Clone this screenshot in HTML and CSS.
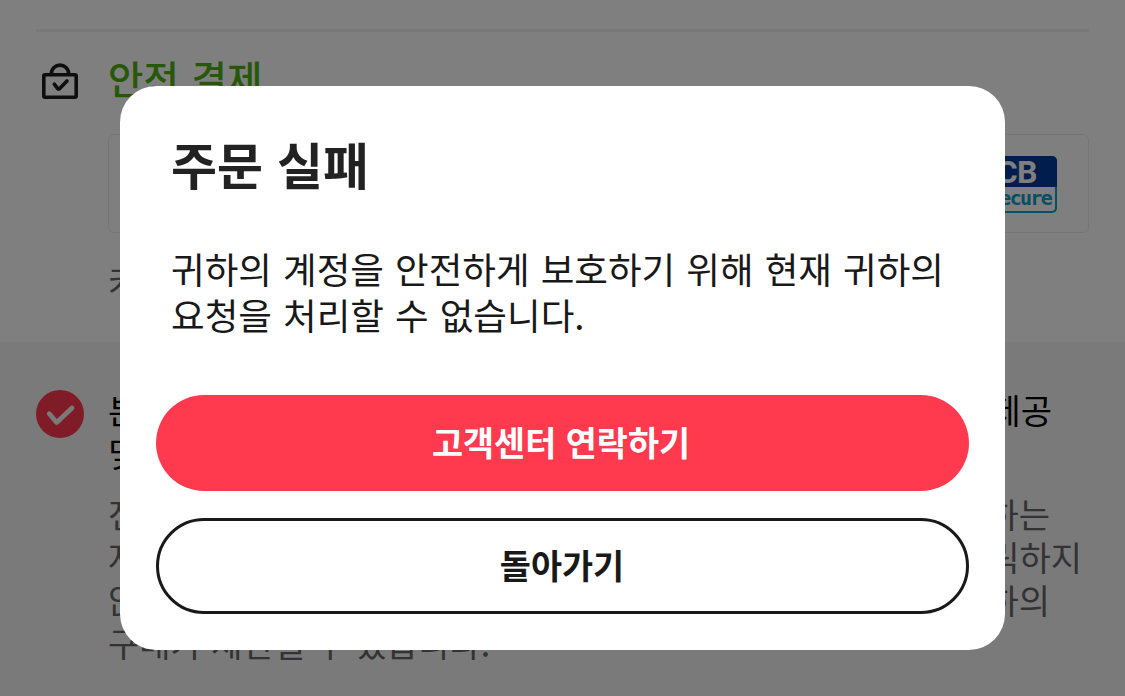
FILE: index.html
```html
<!DOCTYPE html>
<html lang="ko">
<head>
<meta charset="utf-8">
<title>주문 실패</title>
<link rel="stylesheet" href="styles.css">
</head>
<body>
<div class="page">
  <section class="payment">
    <svg class="lock" width="48" height="48" viewBox="0 0 48 48" fill="none" stroke="#1c1c1c" stroke-width="3.600" stroke-linecap="round" stroke-linejoin="round">
      <rect x="7.800" y="16.800" width="32.400" height="22.400" rx="1.200"/>
      <path d="M15.200 16.500C15.200 4 32.800 4 32.800 16.500"/>
      <path d="M18.300 26.200l3.400 4.400q1 .8 2 0l7.300-7.600"/>
    </svg>
    <div class="payment-body">
      <h2>안전 결제</h2>
      <div class="badges">
        <div class="jcb">
          <div class="jcb-name">JCB</div>
          <div class="jcb-secure">J/Secure</div>
        </div>
      </div>
      <p class="card-note">카드</p>
    </div>
  </section>
  <section class="terms">
    <svg class="check" width="48" height="48" viewBox="0 0 48 48" fill="none">
      <circle cx="24" cy="24" r="24" fill="#ff394e"/>
      <path d="M13.300 23.700l7.400 8.800L36 18" stroke="#f5f5f5" stroke-width="4.800" stroke-linecap="round" stroke-linejoin="round"/>
    </svg>
    <div class="terms-body">
      <p class="agree">
        <span class="line line-a"><span>본</span><span>제공</span></span>
        <span class="line"><span>및</span></span>
      </p>
      <p class="detail">
        <span class="line line-b"><span>전</span><span>하는</span></span>
        <span class="line line-c"><span>자</span><span>클릭하지</span></span>
        <span class="line line-b"><span>않</span><span>귀하의</span></span>
        <span class="line"><span>구매가 제한될 수 있습니다.</span></span>
      </p>
    </div>
  </section>
</div>

<div class="overlay">
  <div class="modal">
    <h1>주문 실패</h1>
    <p class="message">귀하의 계정을 안전하게 보호하기 위해 현재 귀하의<br>요청을 처리할 수 없습니다.</p>
    <button class="btn btn-primary">고객센터 연락하기</button>
    <button class="btn btn-outline">돌아가기</button>
  </div>
</div>
</body>
</html>
```
FILE: styles.css
```css
* {
  box-sizing: border-box;
}

body {
  margin: 0;
  height: 696px;
  overflow: hidden;
  background: #fff;
  font-family: "Noto Sans CJK KR", sans-serif;
}

h1, h2, p {
  margin: 0;
  white-space: nowrap;
}

.page {
  height: 696px;
  padding-top: 29px;
  overflow: hidden;
}

.payment {
  display: flex;
  gap: 24px;
  height: 313px;
  margin: 0 36px;
  padding-top: 20px;
  border-top: 3px solid #f2f2f2;
}

.lock {
  flex: none;
  margin-top: 6px;
}

.payment-body {
  flex: 1;
}

h2 {
  height: 82px;
  font-size: 38.5px;
  font-weight: 500;
  line-height: 50px;
  word-spacing: 2px;
  color: #4fb010;
}

/* card brand logos */
.badges {
  display: flex;
  justify-content: flex-end;
  width: 981px;
  height: 99px;
  padding: 21px 31px;
  border: 1px solid #ebebeb;
  border-radius: 6px;
}

.jcb {
  width: 96px;
  height: 57px;
  border: 2px solid #0aa0c8;
  border-top: 0;
  border-radius: 5px;
  text-align: right;
  font-weight: bold;
}

.jcb-name {
  height: 31px;
  margin: 0 -2px;
  padding-right: 20px;
  border-radius: 5px 5px 0 0;
  background: #003a9b;
  color: #fff;
  font-family: Roboto, sans-serif;
  font-size: 32px;
  line-height: 32px;
  letter-spacing: -0.5px;
}

.jcb-secure {
  padding-right: 4px;
  color: #0aa0c8;
  font-family: "DejaVu Sans Mono", monospace;
  font-size: 20px;
  line-height: 23px;
  letter-spacing: -1.7px;
}

.card-note {
  margin-top: 23px;
  font-size: 34px;
  line-height: 50px;
  color: #666;
}

.terms {
  display: flex;
  gap: 24px;
  height: 354px;
  padding: 48px 36px 0;
  background: #f5f5f5;
}

.check {
  flex: none;
}

.terms-body {
  width: 981px;
  margin-top: -2px;
}

.line {
  display: flex;
  justify-content: space-between;
  height: 43px;
  line-height: 43px;
}

.line-a {
  width: 944px;
}

.line-b {
  width: 942px;
}

.line-c {
  width: 974px;
}

.agree {
  font-size: 34px;
  color: #000;
}

.detail {
  margin-top: 18px;
  font-size: 34px;
  color: #666;
}

.overlay {
  position: fixed;
  inset: 0;
  display: flex;
  justify-content: center;
  align-items: flex-start;
  padding-top: 86px;
  background: rgba(0, 0, 0, 0.5);
}

.modal {
  width: 885px;
  height: 564px;
  padding: 40px 36px 36px;
  border-radius: 36px;
  background: #fff;
}

h1 {
  height: 74px;
  padding-left: 15px;
  font-size: 50px;
  line-height: 74px;
  color: #222;
}

.message {
  height: 139px;
  margin: 46px 0 10px;
  padding-left: 15px;
  font-size: 36.6px;
  line-height: 46px;
  word-spacing: 0.8px;
  color: #191919;
}

.btn {
  display: block;
  width: 813px;
  height: 96px;
  border: 0;
  border-radius: 48px;
  padding: 0 1px 4px 0;
  font-family: inherit;
  font-size: 33.8px;
  font-weight: bold;
}

.btn-primary {
  padding-right: 3px;
  background: #ff394e;
  color: #fff;
}

.btn-outline {
  margin-top: 27px;
  border: 3px solid #191919;
  background: #fff;
  color: #191919;
}
```
